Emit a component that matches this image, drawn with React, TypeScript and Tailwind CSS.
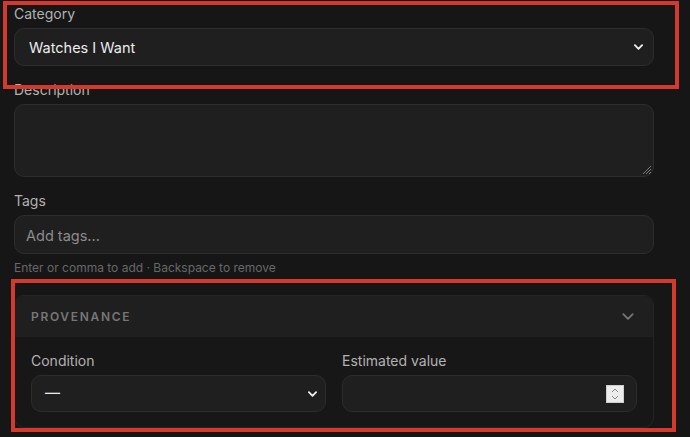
import React from 'react';

const Chevron: React.FC<{ className?: string; w?: number; h?: number; sw?: number }> = ({ className, w = 10, h = 6, sw = 2 }) => (
  <svg width={w} height={h} viewBox="0 0 10 6" fill="none" className={className}>
    <path d="M1 1l4 4 4-4" stroke="currentColor" strokeWidth={sw} strokeLinecap="round" strokeLinejoin="round" />
  </svg>
);

const Label: React.FC<{ children: React.ReactNode }> = ({ children }) => (
  <label className="block text-[14px] leading-5 text-[#b2b2b2]">{children}</label>
);

const boxCls = 'rounded-[10px] border border-[#2d2d2d] bg-[#1f1f1f]';

export default function App() {
  return (
    <div className="relative h-[437px] w-[690px] overflow-hidden bg-[#161616] font-['Inter','Noto_Sans',sans-serif]">
      <div className="ml-[14px] flex w-[640px] flex-col pt-1">
        {/* Category */}
        <div className="flex flex-col gap-1">
          <Label>Category</Label>
          <div className={`${boxCls} flex h-[38px] items-center justify-between pl-3.5 pr-[10px]`}>
            <span className="pt-[1px] text-[14.5px] text-[#ececec]">Watches I Want</span>
            <Chevron className="text-[#f0f0f0]" w={9} h={6} />
          </div>
        </div>

        {/* Description */}
        <div className="mt-[14px] flex flex-col gap-1">
          <Label>Description</Label>
          <div className={`${boxCls} relative h-[73px]`}>
            <svg width="10" height="10" viewBox="0 0 10 10" className="absolute bottom-[1px] right-[1px]">
              <path d="M9 1L1 9M9 4L4 9M9 7L7 9" stroke="#7a7a7a" strokeWidth="1" />
            </svg>
          </div>
        </div>

        {/* Tags */}
        <div className="mt-[14px] flex flex-col gap-1">
          <Label>Tags</Label>
          <div className={`${boxCls} flex h-[39px] items-center px-[11px]`}>
            <span className="pt-[2px] text-[14.5px] text-[#8c8c8c]">Add tags...</span>
          </div>
          <p className="mt-[2px] text-[12px] leading-4 text-[#686868]">Enter or comma to add · Backspace to remove</p>
        </div>

        {/* Provenance section */}
        <div className="mt-[19px] overflow-hidden rounded-[10px] border border-[#242424] bg-[#171717]">
          <div className="flex h-[41px] items-center justify-between bg-[#1f1f1f] pl-4 pr-[19px]">
            <span className="text-[12px] font-semibold uppercase tracking-[0.14em] text-[#767676]">Provenance</span>
            <Chevron className="text-[#777777]" w={12} h={7} sw={1.5} />
          </div>
          <div className="grid grid-cols-2 gap-4 px-4 pb-[15px] pt-[14px]">
            <div className="flex flex-col gap-1">
              <Label>Condition</Label>
              <div className={`${boxCls} flex h-[37px] items-center justify-between pl-[13px] pr-[8px]`}>
                <span className="text-[15px] text-[#ececec]">—</span>
                <Chevron className="text-[#f0f0f0]" w={9} h={6} />
              </div>
            </div>
            <div className="flex flex-col gap-1">
              <Label>Estimated value</Label>
              <div className={`${boxCls} flex h-[37px] items-center justify-end pr-[12px]`}>
                <div className="flex h-[18px] w-[18px] flex-col items-center justify-center gap-[2px] border border-[#cfcfcf] bg-[#ececec]">
                  <svg width="8" height="5" viewBox="0 0 8 5" fill="none">
                    <path d="M1 4l3-3 3 3" stroke="#8a8a8a" strokeWidth="1" />
                  </svg>
                  <svg width="8" height="5" viewBox="0 0 8 5" fill="none">
                    <path d="M1 1l3 3 3-3" stroke="#8a8a8a" strokeWidth="1" />
                  </svg>
                </div>
              </div>
            </div>
          </div>
        </div>
      </div>

      {/* highlight frames */}
      <div className="pointer-events-none absolute left-[3px] top-[1px] h-[88px] w-[676px] border-4 border-[#d33a2c]" />
      <div className="pointer-events-none absolute left-[11px] top-[279px] h-[153px] w-[665px] border-4 border-[#d33a2c]" />
    </div>
  );
}
